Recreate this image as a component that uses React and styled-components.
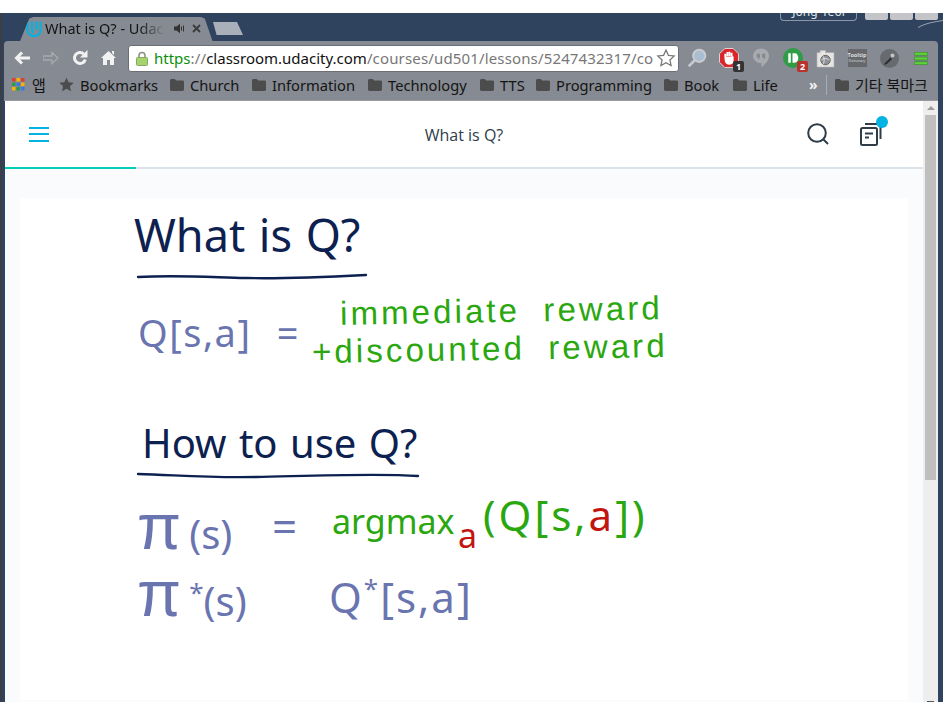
// Libraries
import React from 'react';
import styled, { createGlobalStyle } from 'styled-components';

const GlobalStyle = createGlobalStyle`
  html, body {
    margin: 0;
    padding: 0;
    background: #fff;
  }
  * {
    box-sizing: border-box;
  }
`;

const BOOKMARKS = [
  { label: 'Bookmarks', star: true, width: 111 },
  { label: 'Church', width: 82 },
  { label: 'Information', width: 116 },
  { label: 'Technology', width: 112 },
  { label: 'TTS', width: 56 },
  { label: 'Programming', width: 128 },
  { label: 'Book', width: 69 },
  { label: 'Life', width: 62 },
];

const Folder = () => (
  <svg width="14" height="12" viewBox="0 0 14 12">
    <path d="M0 1.500C0 .7.6 0 1.400 0h3.400l1.400 1.600h6.400c.8 0 1.400.6 1.400 1.400v7.600c0 .8-.6 1.400-1.400 1.400H1.400C.6 12 0 11.400 0 10.600z" fill="#4c4c4c" />
  </svg>
);

const UdacityLogo = () => (
  <svg width="16" height="18" viewBox="0 0 16 18" fill="none" stroke="#02b3e4" strokeWidth="2.200">
    <path d="M1.500 1.500v8.500c0 3.500 3 6 6.500 6s6.500-2.500 6.500-6V1.500" />
    <path d="M6 1.500v8.500c0 1.200.8 2 2 2M10.500 1.500v8.500" />
  </svg>
);

const Speaker = () => (
  <svg width="11" height="11" viewBox="0 0 11 11" fill="#333">
    <path d="M0 3.500h2.500L6 .8v9.400L2.500 7.500H0z" />
    <path d="M7.500 3.500v4M9.500 2.500v6" stroke="#333" strokeWidth="1" />
  </svg>
);

const CloseX = () => (
  <svg width="9" height="9" viewBox="0 0 9 9" stroke="#3c3c3c" strokeWidth="1.800">
    <path d="M1 1l7 7M8 1l-7 7" />
  </svg>
);

const BackIcon = () => (
  <svg width="16" height="14" viewBox="0 0 16 14" fill="none" stroke="#f2f2f2" strokeWidth="3">
    <path d="M16 7H3M8 1.500 2.500 7 8 12.500" />
  </svg>
);

const ForwardIcon = () => (
  <svg width="16" height="14" viewBox="0 0 16 14" fill="none" stroke="#a6a9ae" strokeWidth="1.400">
    <path d="M0 5h9V1.500L15 7l-6 5.500V9H0z" />
  </svg>
);

const ReloadIcon = () => (
  <svg width="16" height="16" viewBox="0 0 16 16" fill="none">
    <path d="M13.300 9.500A5.500 5.500 0 1 1 11.800 4" stroke="#f2f2f2" strokeWidth="3" />
    <path d="M15.500 0v7.500H8z" fill="#f2f2f2" />
  </svg>
);

const HomeIcon = () => (
  <svg width="15" height="14" viewBox="0 0 15 14" fill="#f2f2f2">
    <path d="M7.500 0 15 7h-2v7H9V9H6v5H2V7H0z" />
    <path d="M11 0h2v4l-2-2z" />
  </svg>
);

const LockIcon = () => (
  <svg width="12" height="15" viewBox="0 0 12 15">
    <path d="M3 7V4.500a3 3 0 0 1 6 0V7" fill="none" stroke="#8d9186" strokeWidth="1.600" />
    <rect x=".5" y="6.500" width="11" height="8" rx="1" fill="#a6d36c" stroke="#8aa860" />
  </svg>
);

const StarIcon = () => (
  <svg width="20" height="20" viewBox="0 0 24 24" fill="#fff" stroke="#777" strokeWidth="1.500">
    <path d="M12 2.500l2.900 6.300 6.900.8-5.100 4.700 1.400 6.800-6.100-3.400-6.100 3.400 1.400-6.800-5.100-4.700 6.900-.8z" />
  </svg>
);

const MagnifierIcon = () => (
  <svg width="20" height="20" viewBox="0 0 18 18" fill="none">
    <circle cx="11" cy="7" r="5.500" fill="#a9bed0" stroke="#c9ccd0" strokeWidth="1.800" />
    <path d="M7 11 1.500 16.500" stroke="#c7cace" strokeWidth="2.400" />
  </svg>
);

const AdblockIcon = () => (
  <svg width="20" height="20" viewBox="0 0 19 19">
    <path d="M5.500.5h8l5 5v8l-5 5h-8l-5-5v-8z" fill="#d8262b" stroke="#e8e8e8" strokeWidth=".8" />
    <path d="M6 8V5.500M8 7.500V3.800M10 7.500V3.500M12 8V4.500M6 8l.3 4c.5 2.200 1.800 3 3.700 3s3-1.200 3-3.500V8" stroke="#fff" strokeWidth="1.800" fill="#fff" />
  </svg>
);

const QuoteIcon = () => (
  <svg width="16" height="20" viewBox="0 0 15 18">
    <path d="M7.500 0C11.600 0 15 3 15 7c0 4.500-4 8-7 11v-4C3.500 14 0 11 0 7c0-4 3.400-7 7.500-7z" fill="#a8aaae" />
    <path d="M3.500 5h3v3.500L5 11V8.500H3.500zM8.500 5h3v3.500L10 11V8.500H8.500z" fill="#84898f" />
  </svg>
);

const PushbulletIcon = () => (
  <svg width="20" height="20" viewBox="0 0 19 19">
    <circle cx="9.500" cy="9.500" r="9.500" fill="#2f9d45" />
    <rect x="5" y="5" width="2.400" height="9" fill="#fff" />
    <path d="M9 5h2c2.500 0 3.500 2 3.500 4.500S13.500 14 11 14H9z" fill="#fff" />
  </svg>
);

const FolderEarthIcon = () => (
  <svg width="19" height="19" viewBox="0 0 18 18">
    <path d="M1 3.500h3V1.500h5v2h8V17H1z" fill="#e7e6e3" stroke="#bbb" strokeWidth=".6" />
    <circle cx="9" cy="10.500" r="4.500" fill="#8f9298" stroke="#555" strokeWidth=".8" />
    <path d="M5 10.500c2-2 5-2 8 0M7 7c1 2 1 5 0 7" fill="none" stroke="#e7e6e3" strokeWidth=".8" />
  </svg>
);

const HornIcon = () => (
  <svg width="19" height="19" viewBox="0 0 19 19">
    <circle cx="9.500" cy="9.500" r="9.500" fill="#676a6f" />
    <path d="M4 16c.5-2 1.500-2.500 3-4l3.500-3.500 1.500 1.500-3.500 3.500c-1.500 1.500-2.500 2-4.500 2.500z" fill="#2e2e2e" />
    <circle cx="12.500" cy="6.500" r="2" fill="#c4c4c4" />
  </svg>
);

const MenuIcon = () => (
  <svg width="14" height="13" viewBox="0 0 14 13" fill="#5dd43c" stroke="#2d7d1c" strokeWidth=".6">
    <rect x=".3" y=".3" width="13.400" height="3" rx=".6" />
    <rect x=".3" y="5" width="13.400" height="3" rx=".6" />
    <rect x=".3" y="9.700" width="13.400" height="3" rx=".6" />
  </svg>
);

const AppsGrid = () => (
  <svg width="13" height="13" viewBox="0 0 13 13">
    {['#e53b30', '#f4b400', '#e53b30', '#2c9c48', '#3b78e7', '#f4b400', '#f4b400', '#2c9c48', '#3b78e7'].map((c, i) => (
      <rect key={i} x={(i % 3) * 4.5} y={Math.floor(i / 3) * 4.5} width="3.500" height="3.500" fill={c} />
    ))}
  </svg>
);

const BookmarkStar = () => (
  <svg width="15" height="15" viewBox="0 0 24 24" fill="#4c4c4c">
    <path d="M12 1l3.400 7.400 8.100.9-6 5.500 1.700 8L12 18.700 4.800 22.800l1.700-8-6-5.500 8.100-.9z" />
  </svg>
);

const SearchIcon = () => (
  <svg width="22" height="22" viewBox="0 0 22 22" fill="none" stroke="#2e3d49" strokeWidth="2">
    <circle cx="10" cy="10" r="8.800" />
    <path d="M16.500 16.500 21 21" />
  </svg>
);

const NotesIcon = () => (
  <svg width="22" height="24" viewBox="0 0 22 24" fill="none" stroke="#2e3d49" strokeWidth="2">
    <rect x="1" y="6" width="16" height="17" rx="1.500" />
    <path d="M5 2h13M20.500 4v13M5 11.500h8M5 15.500h4" />
  </svg>
);

const WavyRule = ({ width, d }) => (
  <RuleSvg width={width} height="10" viewBox={`0 0 ${width} 10`} fill="none" stroke="#0d2150" strokeWidth="2.400" strokeLinecap="round">
    <path d={d} />
  </RuleSvg>
);

const App = () => (
  <>
    <GlobalStyle />
    <Win>
      <TitleBar>
        <TabStrip>
          <ActiveTab>
            <UdacityLogo />
            <TabTitle>What is Q? - Udacity</TabTitle>
            <Speaker />
            <CloseX />
          </ActiveTab>
          <NewTab />
        </TabStrip>
        <WinActions>
          <Profile><span>Jong-Yeol</span></Profile>
          <WinButton />
          <WinButton />
          <WinButton />
        </WinActions>
        <CornerGlint width="25" height="8" viewBox="0 0 25 8" fill="none" stroke="#9aa5b3">
          <path d="M0 7.500C8 3 16 2 25 .5" />
        </CornerGlint>
      </TitleBar>

      <Toolbar>
        <NavRow>
          <NavIcons>
            <BackIcon />
            <ForwardIcon />
            <ReloadIcon />
            <HomeIcon />
          </NavIcons>
          <Omnibox>
            <LockIcon />
            <Url>
              <Https>https</Https><Dim>://</Dim>classroom.udacity.com<Dim>/courses/ud501/lessons/5247432317/co</Dim>
            </Url>
            <StarIcon />
          </Omnibox>
          <Extensions>
            <Ext><MagnifierIcon /></Ext>
            <Ext><AdblockIcon /><Badge $bg="#333">1</Badge></Ext>
            <Ext><QuoteIcon /></Ext>
            <Ext><PushbulletIcon /><Badge $bg="#b8332b">2</Badge></Ext>
            <Ext><FolderEarthIcon /></Ext>
            <Ext><TooltipExt><b>Tooltip</b><small>Dictionary</small></TooltipExt></Ext>
            <Ext><HornIcon /></Ext>
            <Ext><MenuIcon /></Ext>
          </Extensions>
        </NavRow>
        <BookmarkRow>
          <AppsItem>
            <AppsGrid />
            <span>앱</span>
          </AppsItem>
          {BOOKMARKS.map((b) => (
            <Bookmark key={b.label} $width={b.width}>
              {b.star ? <BookmarkStar /> : <Folder />}
              <span>{b.label}</span>
            </Bookmark>
          ))}
          <More>»</More>
          <OtherBookmarks>
            <Folder />
            <span>기타 북마크</span>
          </OtherBookmarks>
        </BookmarkRow>
      </Toolbar>

      <Viewport>
        <Page>
          <PageHeader>
            <Hamburger><i /><i /><i /></Hamburger>
            <PageTitle>What is Q?</PageTitle>
            <HeaderIcons>
              <SearchIcon />
              <NotesWrap>
                <NotesIcon />
                <Dot />
              </NotesWrap>
            </HeaderIcons>
            <Progress />
          </PageHeader>
          <PageBody>
            <Board>
              <Heading>What is Q?</Heading>
              <WavyRule width={232} d="M2 6C40 4 70 6 110 7S190 6 230 4" />
              <DefinitionRow>
                <DefinitionFormula>Q[s,a] =</DefinitionFormula>
                <GreenLines>
                  <GreenLine $indent={28}>immediate reward</GreenLine>
                  <GreenLine $indent={0}>+discounted reward</GreenLine>
                </GreenLines>
              </DefinitionRow>
              <SecondHeading>How to use Q?</SecondHeading>
              <WavyRule width={284} d="M2 5C40 6 70 9 120 8S240 4 282 7" />
              <PolicyRow>
                <PolicyLabel><Pi>π</Pi>(s)</PolicyLabel>
                <Equals>=</Equals>
                <Argmax>argmax<Sub>a</Sub></Argmax>
                <Paren>(Q[s,<Red>a</Red>])</Paren>
              </PolicyRow>
              <OptimalRow>
                <PolicyLabel><Pi>π</Pi><sup>*</sup>(s)</PolicyLabel>
                <StarFormula>Q<sup>*</sup>[s,a]</StarFormula>
              </OptimalRow>
            </Board>
          </PageBody>
        </Page>
        <Scrollbar>
          <ArrowUp />
          <Thumb />
          <ArrowDown />
        </Scrollbar>
      </Viewport>
    </Win>
  </>
);

export default App;

const Win = styled.div`
  margin-top: 13px;
  width: 943px;
  height: 689px;
  background: #2f435e;
  border-left: 2px solid #3b3f45;
  display: flex;
  flex-direction: column;
  padding: 0 5px 0 3px;
  font-family: "Noto Sans", "Noto Sans CJK KR", sans-serif;
  overflow: hidden;
`;

const TitleBar = styled.div`
  position: relative;
  height: 28px;
  display: flex;
  justify-content: space-between;
  align-items: flex-start;
  flex: none;
`;

const CornerGlint = styled.svg`
  position: absolute;
  right: -5px;
  top: 7px;
`;

const TabStrip = styled.div`
  display: flex;
  align-items: flex-start;
  margin-left: 8px;
`;

const ActiveTab = styled.div`
  width: 204px;
  height: 28px;
  margin-top: 4px;
  padding: 0 16px 5px 13px;
  background: #868a92;
  clip-path: polygon(0 100%, 3% 95%, 6% 40%, 8% 5%, 10% 0, 92% 0, 94% 5%, 98% 90%, 100% 100%);
  display: flex;
  align-items: center;
  gap: 3px;
  svg {
    flex: none;
  }
  svg:last-child {
    margin-left: 4px;
  }
`;

const TabTitle = styled.span`
  flex: 1;
  font-size: 14.500px;
  line-height: 18px;
  padding-bottom: 2px;
  color: #141414;
  white-space: nowrap;
  overflow: hidden;
  margin-right: 6px;
  -webkit-mask-image: linear-gradient(to right, #000 78%, transparent 100%);
`;

const NewTab = styled.div`
  width: 30px;
  height: 13px;
  margin: 9px 0 0 -4px;
  background: #aab0ba;
  clip-path: polygon(12% 100%, 0 0, 80% 0, 100% 100%);
`;

const WinActions = styled.div`
  display: flex;
  align-items: flex-start;
  gap: 2px;
`;

const Profile = styled.div`
  width: 77px;
  height: 8px;
  margin-right: 6px;
  border: 1px solid #8a97a8;
  border-top: none;
  border-radius: 0 0 4px 4px;
  overflow: hidden;
  display: flex;
  justify-content: center;
  align-items: flex-end;
  span {
    font-size: 12px;
    line-height: 12px;
    color: #dfe3e8;
    white-space: nowrap;
    margin-bottom: 2px;
  }
`;

const WinButton = styled.div`
  width: 23px;
  height: 7px;
  background: #c3c5c9;
  border-radius: 0 0 2px 2px;
`;

const Toolbar = styled.div`
  flex: none;
  height: 60px;
  background: #868a92;
  margin-left: -1px;
  border-radius: 4px 4px 0 0;
  display: flex;
  flex-direction: column;
`;

const NavRow = styled.div`
  height: 32px;
  padding: 2px 0 0 10px;
  display: flex;
  align-items: center;
`;

const NavIcons = styled.div`
  width: 114px;
  display: flex;
  align-items: center;
  gap: 13px;
`;

const Omnibox = styled.div`
  width: 551px;
  height: 27px;
  background: #fff;
  border: 1px solid #6b6e73;
  border-radius: 3px;
  display: flex;
  align-items: center;
  padding: 0 2px 0 7px;
`;

const Url = styled.div`
  flex: 1;
  margin-left: 6px;
  padding-bottom: 1px;
  font-size: 15px;
  color: #111;
  white-space: nowrap;
  overflow: hidden;
`;

const Https = styled.span`
  color: #0a8f0a;
`;

const Dim = styled.span`
  color: #777;
  letter-spacing: 0.15px;
`;

const Extensions = styled.div`
  display: flex;
  align-items: center;
  margin-left: 2px;
`;

const Ext = styled.div`
  position: relative;
  width: 32px;
  height: 24px;
  display: flex;
  align-items: center;
  justify-content: center;
`;

const Badge = styled.span`
  position: absolute;
  right: 1px;
  bottom: -2px;
  width: 11px;
  height: 11px;
  border-radius: 2px;
  background: ${(p) => p.$bg};
  color: #fff;
  font-size: 9px;
  font-weight: 700;
  line-height: 11px;
  text-align: center;
`;

const TooltipExt = styled.span`
  width: 19px;
  height: 18px;
  background: #66686c;
  color: #ddd;
  display: flex;
  flex-direction: column;
  align-items: center;
  justify-content: center;
  line-height: 6px;
  white-space: nowrap;
  b {
    font-size: 5.500px;
  }
  small {
    font-size: 3.500px;
  }
`;

const BookmarkRow = styled.div`
  height: 28px;
  display: flex;
  align-items: center;
  padding: 0 0 4px 8px;
  font-size: 14.700px;
  color: #141414;
  border-bottom: 1px solid #9a9a9a;
`;

const AppsItem = styled.div`
  width: 47px;
  display: flex;
  align-items: center;
  gap: 7px;
  span {
    font-size: 15px;
  }
`;

const Bookmark = styled.div`
  width: ${(p) => p.$width}px;
  flex: none;
  display: flex;
  align-items: center;
  gap: 6px;
  white-space: nowrap;
`;

const More = styled.div`
  width: 18px;
  margin-left: 14px;
  color: #f2f2f2;
  font-weight: 700;
  font-size: 14px;
`;

const OtherBookmarks = styled.div`
  margin-left: -1px;
  padding-left: 8px;
  border-left: 1px solid #a9acb1;
  height: 20px;
  display: flex;
  align-items: center;
  gap: 6px;
  white-space: nowrap;
  span {
    font-size: 15px;
  }
`;

const Viewport = styled.div`
  flex: 1;
  min-height: 0;
  display: flex;
`;

const Page = styled.div`
  flex: 1;
  min-width: 0;
  display: flex;
  flex-direction: column;
  background: #f9fbfd;
`;

const PageHeader = styled.div`
  position: relative;
  flex: none;
  height: 68px;
  background: #fff;
  border-bottom: 2px solid #dbe2e8;
  display: grid;
  grid-template-columns: 1fr auto 1fr;
  align-items: center;
  padding: 0 24px;
`;

const Hamburger = styled.div`
  width: 20px;
  display: flex;
  flex-direction: column;
  gap: 4.500px;
  i {
    display: block;
    height: 2px;
    background: #02b3e4;
  }
`;

const PageTitle = styled.div`
  padding-top: 2px;
  font-family: "Open Sans", sans-serif;
  font-size: 16px;
  color: #2e3d49;
`;

const HeaderIcons = styled.div`
  justify-self: end;
  padding-right: 17px;
  display: flex;
  align-items: center;
  gap: 31px;
`;

const NotesWrap = styled.div`
  position: relative;
  display: flex;
`;

const Dot = styled.span`
  position: absolute;
  top: -6px;
  right: -6px;
  width: 12px;
  height: 12px;
  border-radius: 50%;
  background: #02b3e4;
`;

const Progress = styled.div`
  position: absolute;
  left: 0;
  bottom: -2px;
  width: 131px;
  height: 2px;
  background: #02ccba;
`;

const PageBody = styled.div`
  flex: 1;
  min-height: 0;
  padding: 29px 15px 2px 15px;
`;

const Board = styled.div`
  height: 100%;
  background: #fff;
  padding: 8px 0 0 114px;
  overflow: hidden;
`;

const Heading = styled.div`
  font-size: 45px;
  line-height: 58px;
  color: #0d2150;
  word-spacing: 2px;
`;

const SecondHeading = styled(Heading)`
  margin: 46px 0 -10px 8px;
  font-size: 40px;
`;

const RuleSvg = styled.svg`
  display: block;
  margin: 7px 0 0 2px;
`;

const DefinitionRow = styled.div`
  display: grid;
  grid-template-columns: 174px auto;
  justify-content: start;
  align-items: center;
  margin: 7px 0 0 4px;
`;

const Formula = styled.div`
  font-size: 38px;
  line-height: 46px;
  color: #6a75b0;
  white-space: nowrap;
  sup {
    font-size: 26px;
    line-height: 0;
  }
`;

const DefinitionFormula = styled(Formula)`
  padding-top: 8px;
  letter-spacing: 1.500px;
  word-spacing: 14px;
`;

const StarFormula = styled(Formula)`
  font-size: 42px;
  letter-spacing: 2px;
`;

const GreenLines = styled.div`
  padding-top: 4px;
  display: flex;
  flex-direction: column;
`;

const GreenLine = styled.div`
  margin-left: ${(p) => p.$indent}px;
  font-family: "Liberation Sans", sans-serif;
  font-size: 33px;
  line-height: 38px;
  letter-spacing: 3.100px;
  word-spacing: 11px;
  color: #2aa70f;
  white-space: nowrap;
  transform: rotate(-1deg);
`;

const PolicyRow = styled.div`
  display: flex;
  align-items: flex-start;
  margin: 24px 0 0 3px;
  color: #6a75b0;
`;

const PolicyLabel = styled.div`
  width: 132px;
  margin-top: 8px;
  font-size: 40px;
  line-height: 46px;
  color: #6a75b0;
  white-space: nowrap;
  sup {
    font-size: 26px;
    line-height: 0;
  }
`;

const Pi = styled.span`
  font-family: "Liberation Sans", sans-serif;
  font-size: 64px;
  line-height: 0;
  letter-spacing: 8px;
`;

const Equals = styled.div`
  width: 63px;
  padding-left: 3px;
  font-size: 44px;
  line-height: 46px;
`;

const Argmax = styled.div`
  position: relative;
  width: 149px;
  margin-top: -5px;
  font-size: 34px;
  line-height: 46px;
  color: #2aa70f;
`;

const Sub = styled.span`
  position: absolute;
  left: 126px;
  top: 14px;
  font-size: 34px;
  color: #c1160f;
`;

const Paren = styled.div`
  margin: -11px 0 0 2px;
  font-size: 42px;
  line-height: 46px;
  letter-spacing: 3px;
  color: #2aa70f;
  white-space: nowrap;
`;

const Red = styled.span`
  color: #c1160f;
`;

const OptimalRow = styled.div`
  display: grid;
  grid-template-columns: 192px auto;
  justify-content: start;
  align-items: center;
  margin: 13px 0 0 3px;
`;

const Scrollbar = styled.div`
  flex: none;
  width: 15px;
  background: #efeeee;
  display: flex;
  flex-direction: column;
  align-items: center;
`;

const ArrowUp = styled.div`
  margin: 5px 0 5px;
  border-left: 4px solid transparent;
  border-right: 4px solid transparent;
  border-bottom: 4px solid #9c9c9c;
`;

const Thumb = styled.div`
  width: 11px;
  height: 365px;
  background: #bfbfbf;
`;

const ArrowDown = styled.div`
  margin-top: auto;
  width: 7px;
  height: 1px;
  background: #555;
`;
